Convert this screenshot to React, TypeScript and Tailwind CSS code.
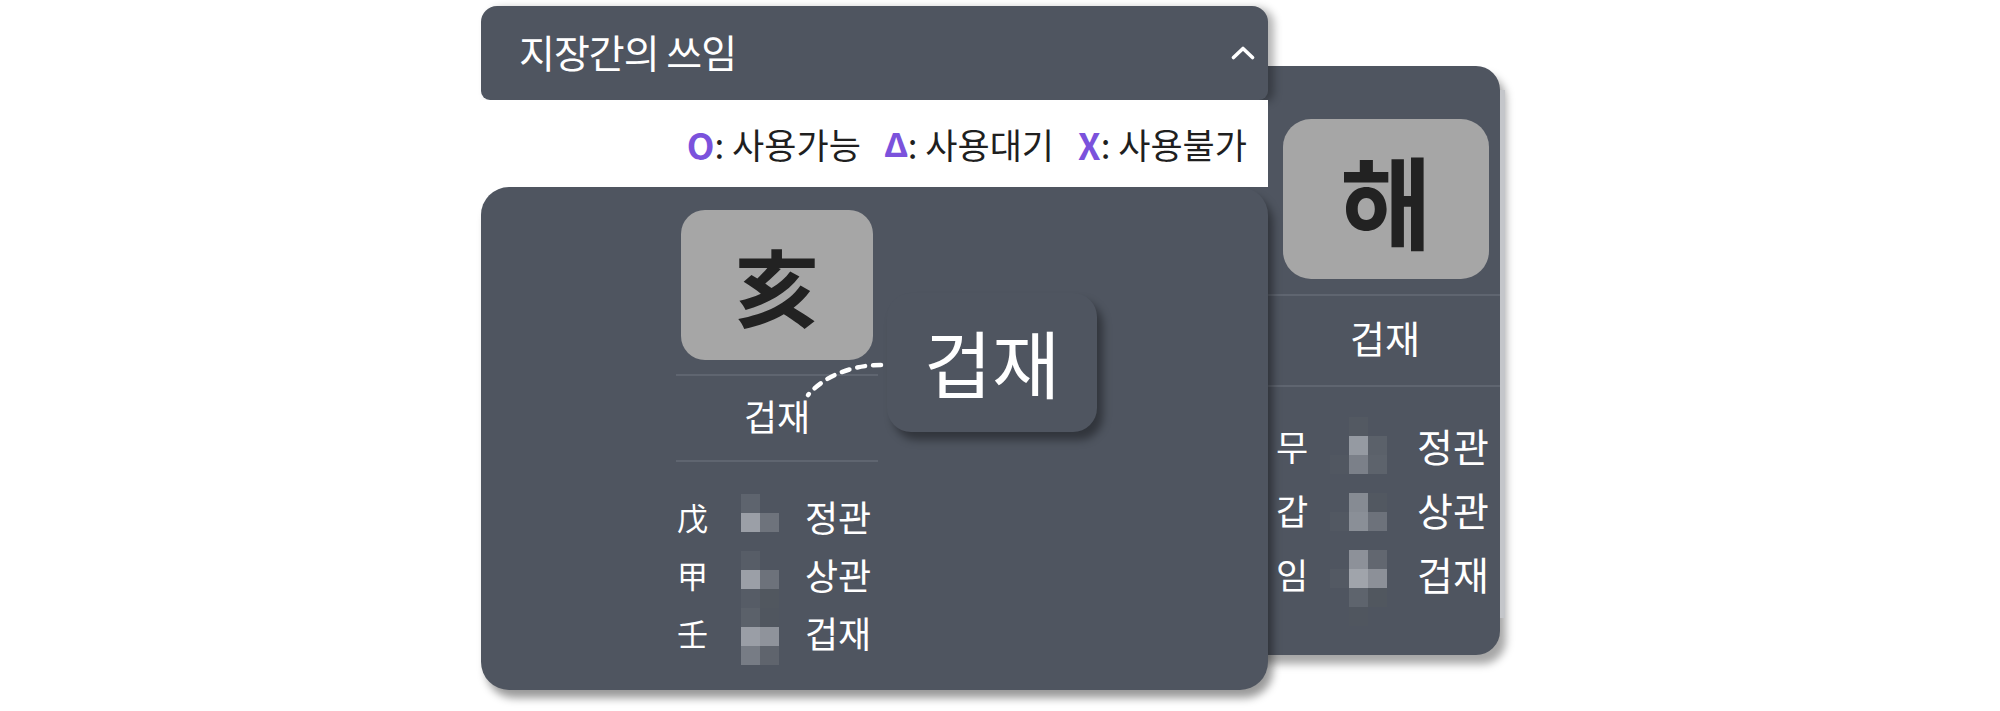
import React from "react";

type Cell = string | null;

const mainMosaic: Cell[][] = [
  ["#5e646e", null],
  ["#9b9fa7", "#6e737c"],
  [null, null],
  ["#575d67", null],
  ["#9b9fa7", "#6d727b"],
  ["#565c66", "#51575f"],
  ["#5b616a", "#50565f"],
  ["#9a9ea6", "#8f939b"],
  ["#777c85", "#5f646d"],
];

const sideMosaic: Cell[][] = [
  [null, "#535962", null],
  [null, "#959aa2", "#5b616a"],
  ["#515761", "#7b8089", "#5d636c"],
  [null, null, null],
  [null, "#868b93", "#525861"],
  ["#525862", "#8a8f97", "#6d727b"],
  [null, null, null],
  [null, "#8d9199", "#626770"],
  ["#535963", "#a0a4ab", "#8c9098"],
  [null, "#5e646d", "#51575f"],
  [null, "#50565f", null],
];

function Mosaic({ rows }: { rows: Cell[][] }) {
  return (
    <div className="flex flex-col">
      {rows.map((r, i) => (
        <div key={i} className="flex">
          {r.map((c, j) => (
            <div
              key={j}
              className="w-[19px] h-[19px]"
              style={{ backgroundColor: c ?? "transparent" }}
            />
          ))}
        </div>
      ))}
    </div>
  );
}

function Chevron() {
  return (
    <svg width="24" height="14" viewBox="0 0 24 14" fill="none">
      <path
        d="M2.5 11.5 L12 2.5 L21.5 11.5"
        stroke="#ffffff"
        strokeWidth="3.6"
        strokeLinecap="round"
        strokeLinejoin="round"
      />
    </svg>
  );
}

function Legend() {
  return (
    <div className="h-[87px] bg-white flex items-center justify-end pr-[21px] text-[35px] text-[#1f1f1f] leading-none">
      <span className="font-bold text-[#7b52dc] text-[36px]">O</span>
      <span>: 사용가능</span>
      <span className="ml-[24px] font-bold text-[#7b52dc] font-['Noto_Sans',sans-serif] text-[34px]">Δ</span>
      <span>: 사용대기</span>
      <span className="ml-[24px] font-bold text-[#7b52dc] text-[36px]">X</span>
      <span>: 사용불가</span>
    </div>
  );
}

export default function App() {
  return (
    <div className="min-h-[711px] w-[2000px] bg-white flex items-start pl-[481px] pt-[6px] font-['Noto_Sans_CJK_KR','Noto_Sans',sans-serif] text-white overflow-hidden">
      {/* 지장간 패널 */}
      <div className="relative z-10 w-[787px] shrink-0 flex flex-col">
        <div className="h-[94px] rounded-t-[16px] rounded-b-[9px] bg-[#4f5560] flex items-center justify-between pl-[38px] pr-[13px] shadow-[6px_2px_8px_rgba(0,0,0,0.3)]">
          <span className="text-[39px] tracking-[-1px] leading-none pb-[4px]">지장간의 쓰임</span>
          <Chevron />
        </div>

        <Legend />

        <div className="relative h-[503px] rounded-[28px] bg-[#4f5560] pl-[195px] pt-[23px] shadow-[5px_8px_8px_rgba(0,0,0,0.4)]">
          <div className="w-[202px] flex flex-col">
            <div className="mx-[5px] h-[150px] rounded-[24px] bg-[#a6a6a6] flex items-center justify-center text-[84px] font-bold text-[#222222] leading-none">
              亥
            </div>
            <div className="mt-[14px] h-[2px] bg-[#5f6570]" />
            <div className="h-[84px] pb-[6px] flex items-center justify-center text-[36px] leading-none">겁재</div>
            <div className="h-[2px] bg-[#5f6570]" />
            <div className="flex pt-[25px] pl-[1px]">
              <div className="w-[64px] flex flex-col text-[31px] leading-none">
                <div className="h-[58px] flex items-center">戊</div>
                <div className="h-[58px] flex items-center">甲</div>
                <div className="h-[58px] flex items-center">壬</div>
              </div>
              <div className="mt-[7px]">
                <Mosaic rows={mainMosaic} />
              </div>
              <div className="ml-[26px] flex flex-col text-[36px] leading-none">
                <div className="h-[58px] flex items-center">정관</div>
                <div className="h-[58px] flex items-center">상관</div>
                <div className="h-[58px] flex items-center">겁재</div>
              </div>
            </div>
          </div>

          {/* 점선 연결 */}
          <svg
            className="absolute left-[320px] top-[170px]"
            width="86"
            height="46"
            viewBox="0 0 86 46"
            fill="none"
          >
            <path
              d="M80 8 C56 8 26 16 7 38"
              stroke="#ffffff"
              strokeWidth="4.5"
              strokeLinecap="round"
              strokeDasharray="8 8"
            />
          </svg>

          {/* 확대 말풍선 */}
          <div className="absolute left-[406px] top-[106px] w-[210px] h-[139px] pb-[4px] rounded-[24px] bg-[#4f5560] flex items-center justify-center text-[74px] leading-none shadow-[6px_8px_8px_rgba(0,0,0,0.38)]">
            겁재
          </div>
        </div>
      </div>

      {/* 해 상세 카드 */}
      <div className="relative z-0 ml-[-28px] mt-[60px] w-[260px] h-[589px] shrink-0 rounded-[24px] bg-[#4f5560] pt-[53px] flex flex-col shadow-[6px_9px_8px_rgba(0,0,0,0.35)]">
        <div className="absolute right-[-5px] top-[24px] bottom-[37px] w-[5px] bg-[#c4c6ca]" />
        <div className="ml-[43px] w-[206px] h-[160px] rounded-[28px] bg-[#a6a6a6] flex items-center justify-center text-[100px] font-bold text-[#222222] leading-none">
          해
        </div>
        <div className="mt-[15px] h-[2px] bg-[#5f6570]" />
        <div className="ml-[36px] w-[218px] h-[89px] pb-[7px] flex items-center justify-center text-[38px] leading-none">
          겁재
        </div>
        <div className="h-[2px] bg-[#5f6570]" />
        <div className="flex pt-[26px] pl-[36px]">
          <div className="w-[54px] flex flex-col text-[35px] leading-none">
            <div className="h-[64px] flex items-center">무</div>
            <div className="h-[64px] flex items-center">갑</div>
            <div className="h-[64px] flex items-center">임</div>
          </div>
          <div className="mt-[4px]">
            <Mosaic rows={sideMosaic} />
          </div>
          <div className="ml-[30px] flex flex-col text-[39px] leading-none">
            <div className="h-[64px] flex items-center">정관</div>
            <div className="h-[64px] flex items-center">상관</div>
            <div className="h-[64px] flex items-center">겁재</div>
          </div>
        </div>
      </div>
    </div>
  );
}
